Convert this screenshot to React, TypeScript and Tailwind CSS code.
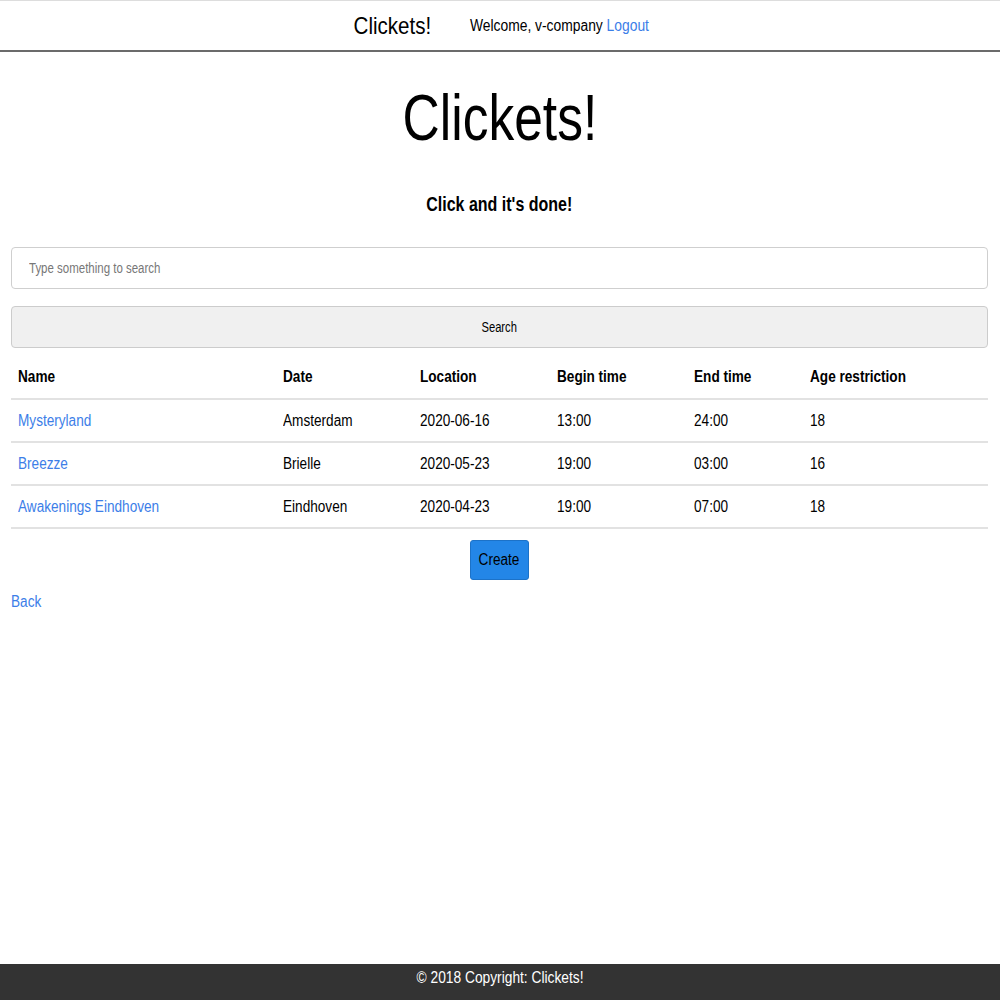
import React from "react";

// the reference uses a narrow face; none is installed, so text is squeezed horizontally
const font = { fontFamily: '"Liberation Sans Narrow", "Arial Narrow", "Liberation Sans", Arial, sans-serif' };

const events = [
  { name: "Mysteryland", date: "Amsterdam", location: "2020-06-16", begin: "13:00", end: "24:00", age: "18" },
  { name: "Breezze", date: "Brielle", location: "2020-05-23", begin: "19:00", end: "03:00", age: "16" },
  { name: "Awakenings Eindhoven", date: "Eindhoven", location: "2020-04-23", begin: "19:00", end: "07:00", age: "18" },
];

const cols = "grid grid-cols-[265px_137px_137px_137px_116px_1fr]";

const Cell = ({ children, className = "" }: { children: React.ReactNode; className?: string }) => (
  <div className={`px-[7px] whitespace-nowrap ${className}`}>
    <span className="inline-block origin-left scale-x-[0.85]">{children}</span>
  </div>
);

export default function App() {
  return (
    <div className="min-h-screen flex flex-col bg-white text-black" style={font}>
      {/* --- Navbar --- */}
      <nav className="h-[52px] border-t border-[#dddddd] border-b-2 border-b-[#6b6b6b] flex items-center justify-center gap-[18px] pl-[10px]">
        <span className="inline-block scale-x-[0.855] text-[24px] leading-none">Clickets!</span>
        <span className="inline-block scale-x-[0.865] text-[16px] leading-none whitespace-nowrap">
          Welcome, v-company <a className="text-[#3c7ee8]">Logout</a>
        </span>
      </nav>

      {/* --- Main --- */}
      <main className="pl-[11px] pr-[12px]">
        <h1 className="mt-[28px] text-[64px] leading-[77px] text-center">
          <span className="inline-block scale-x-[0.805]">Clickets!</span>
        </h1>
        <h5 className="mt-[35px] text-[20px] leading-[24px] font-bold text-center">
          <span className="inline-block scale-x-[0.8]">Click and it's done!</span>
        </h5>

        <div className="relative mt-[31px]">
          <input className="w-full h-[42px] rounded-[4px] border border-[#cfcfcf] px-[17px] text-[14px] outline-none" />
          <span className="absolute left-[18px] top-[11px] text-[14px] leading-[20px] text-[#777777] inline-block origin-left scale-x-[0.82] pointer-events-none">
            Type something to search
          </span>
        </div>
        <button className="mt-[17px] w-full h-[42px] rounded-[4px] border border-[#cccccc] bg-[#f0f0f0] text-[14px] text-black">
          <span className="inline-block scale-x-[0.8]">Search</span>
        </button>

        {/* --- Table --- */}
        <div className="mt-[7px] text-[16px]">
          <div className={`${cols} h-[43px] items-center font-bold`}>
            <Cell>Name</Cell>
            <Cell>Date</Cell>
            <Cell>Location</Cell>
            <Cell>Begin time</Cell>
            <Cell>End time</Cell>
            <Cell>Age restriction</Cell>
          </div>
          {events.map((e) => (
            <div key={e.name} className={`${cols} h-[43px] items-center border-t-2 border-[#e2e2e2]`}>
              <Cell className="text-[#3c7ee8]">{e.name}</Cell>
              <Cell>{e.date}</Cell>
              <Cell>{e.location}</Cell>
              <Cell>{e.begin}</Cell>
              <Cell>{e.end}</Cell>
              <Cell>{e.age}</Cell>
            </div>
          ))}
          <div className="border-t-2 border-[#e2e2e2]" />
        </div>

        <div className="flex justify-center mt-[11px]">
          <button className="w-[59px] h-[40px] rounded-[3px] bg-[#2386e7] border border-[#1c72c8] text-[16px] text-black">
            <span className="inline-block scale-x-[0.85]">Create</span>
          </button>
        </div>

        <a className="block mt-[12px] text-[16px] leading-[20px] text-[#3c7ee8]">
          <span className="inline-block origin-left scale-x-[0.85]">Back</span>
        </a>
      </main>

      {/* --- Footer --- */}
      <footer className="mt-auto h-[36px] bg-[#333333] text-white text-[16px] text-center pt-[2px]">
        <span className="inline-block scale-x-[0.86]">© 2018 Copyright: Clickets!</span>
      </footer>
    </div>
  );
}
